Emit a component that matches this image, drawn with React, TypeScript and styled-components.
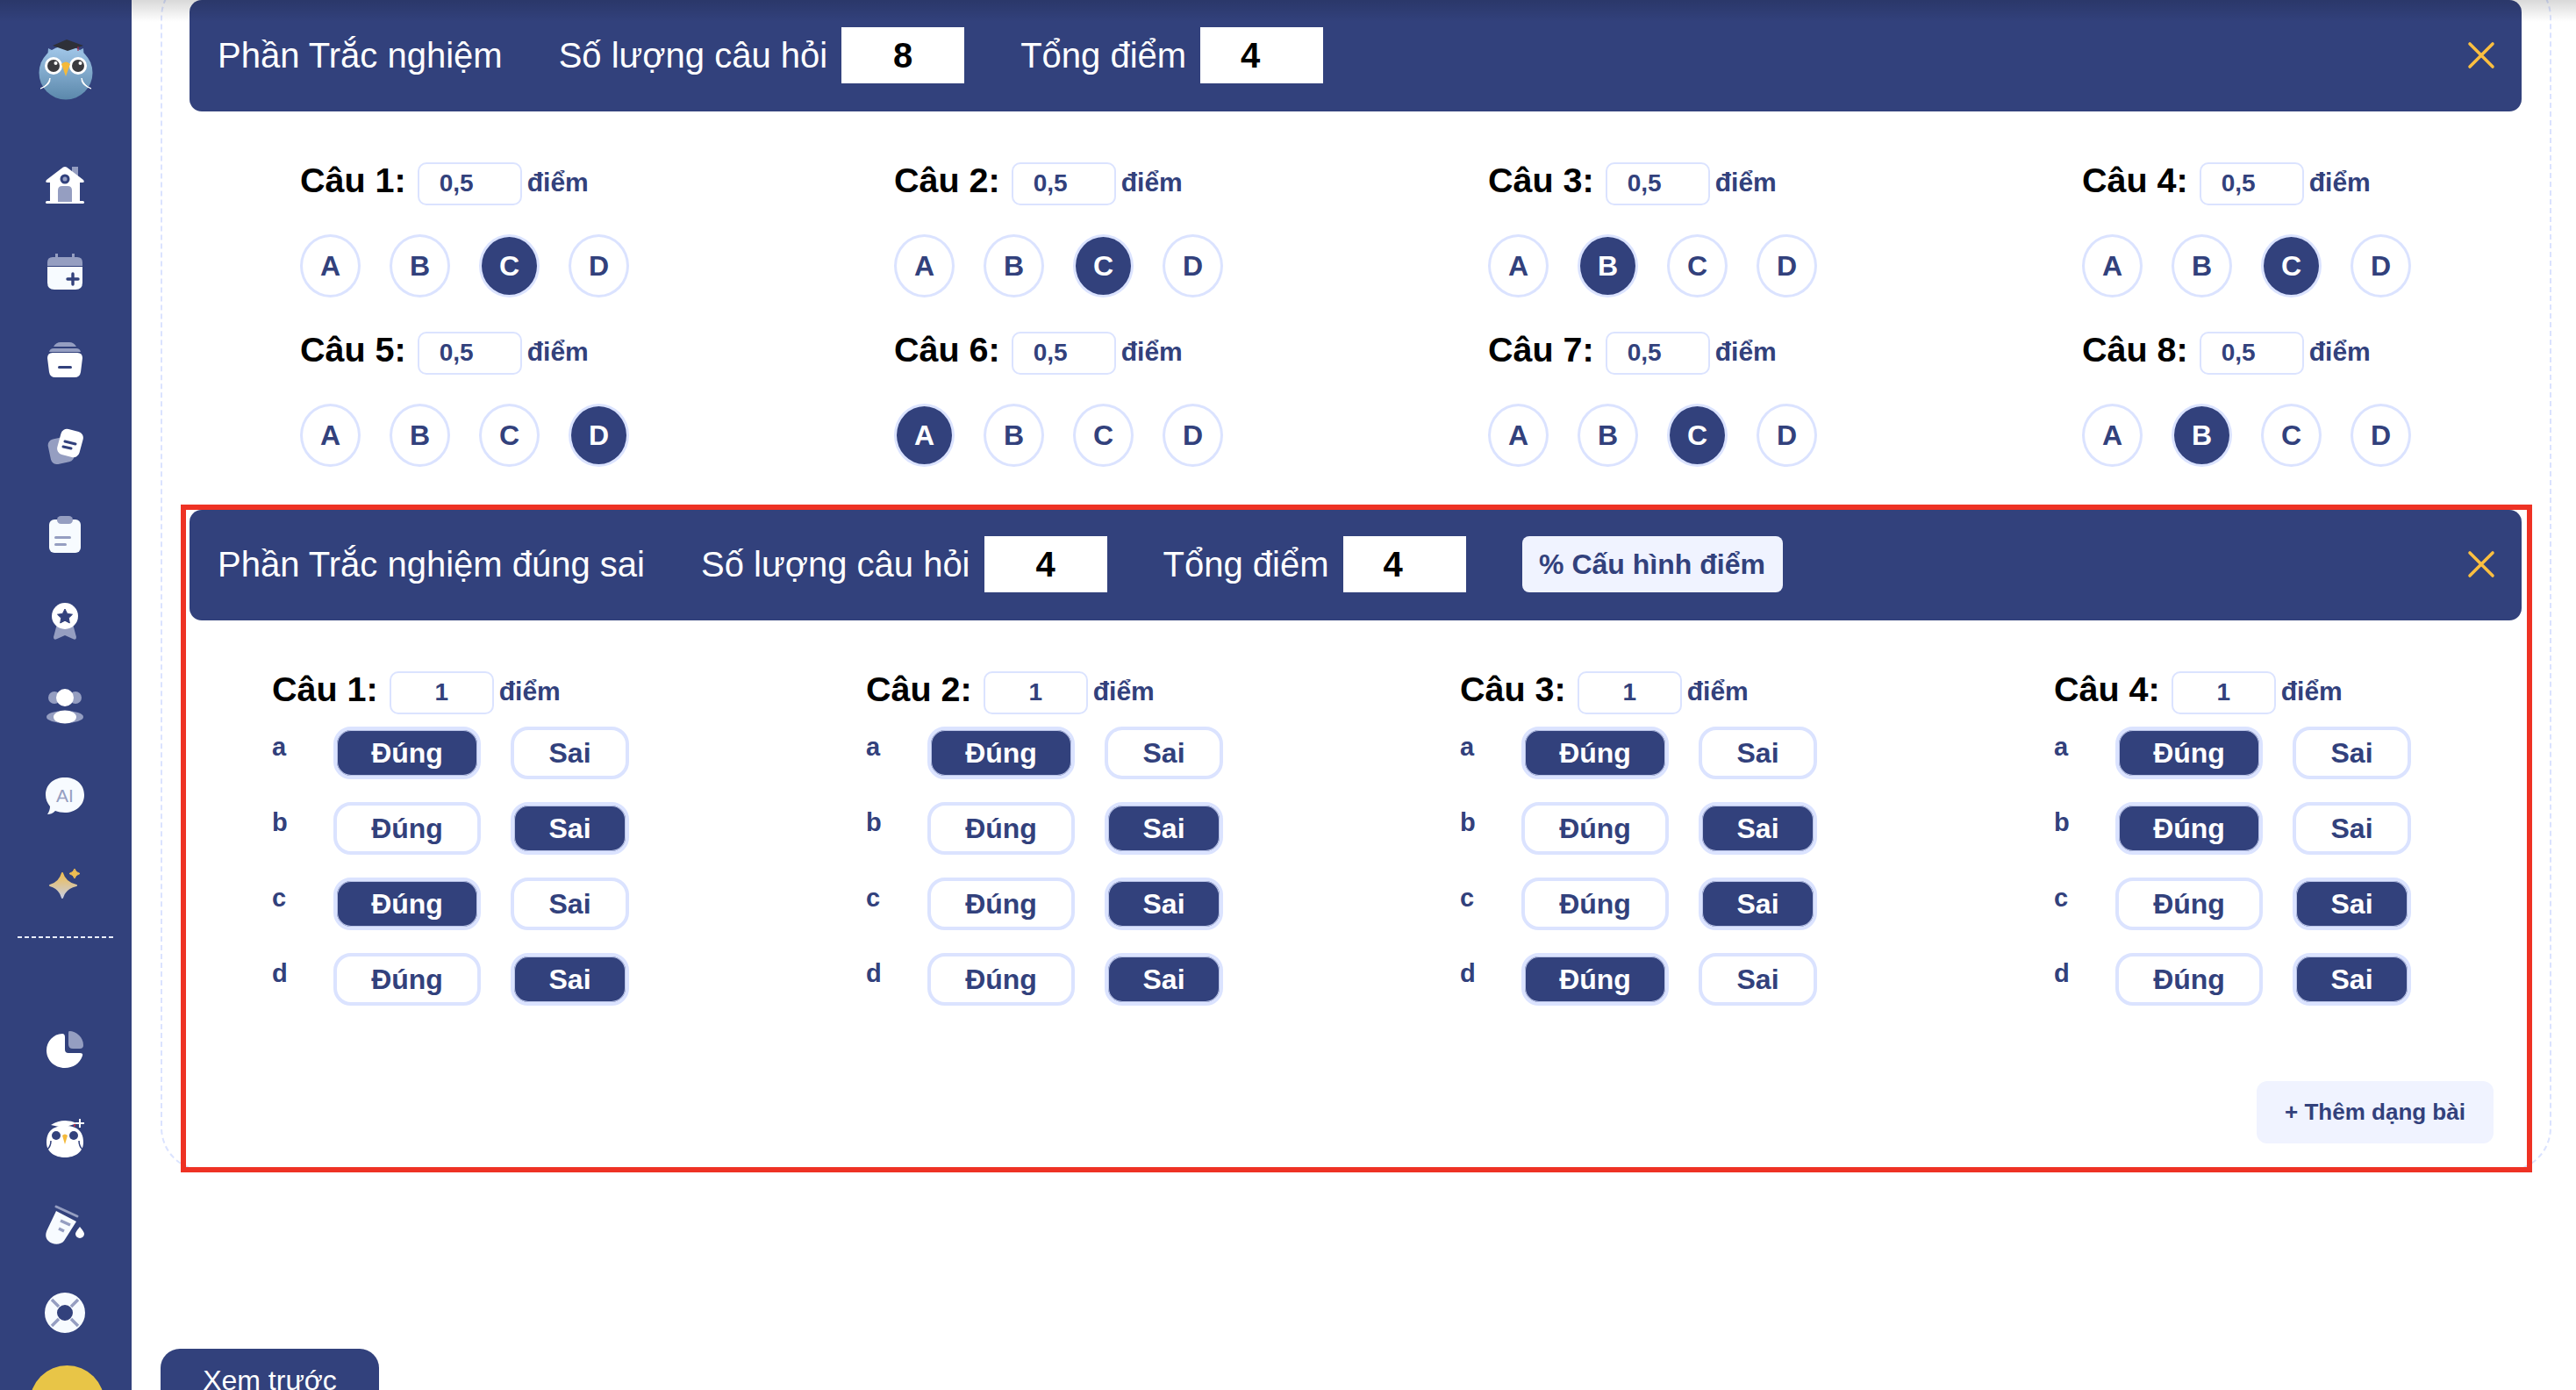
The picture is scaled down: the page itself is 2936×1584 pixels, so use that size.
import React from "react";
import styled, { createGlobalStyle } from "styled-components";

const NAVY = "#32417c";
const EDGE = "#dbe3ff";
const PALE = "#f0f3ff";
const ICON = "#f7fbff";
const SOFT = "#959ec1";

const Global = createGlobalStyle`
  html, body {
    margin: 0;
    height: 1584px;
    overflow: hidden;
    background: #fff;
    font-family: "Liberation Sans", Arial, sans-serif;
  }
`;

const Page = styled.div`
  display: flex;
  position: relative;
  width: 2936px;
  height: 1584px;
  overflow: hidden;
`;

const TopShade = styled.div`
  position: absolute;
  top: 0;
  left: 0;
  right: 0;
  height: 25px;
  background: linear-gradient(rgba(0, 0, 0, 0.15), rgba(0, 0, 0, 0));
`;

const Sidebar = styled.aside`
  width: 150px;
  height: 1584px;
  flex: none;
  background: ${NAVY};
  display: flex;
  flex-direction: column;
  align-items: center;
  padding-top: 45px;
  box-sizing: border-box;
`;

const LogoMark = styled.svg`
  display: block;
  flex: none;
  width: 64px;
  height: 70px;
`;

const NavList = styled.nav<{ $gap: number; $top: number }>`
  display: flex;
  flex: none;
  flex-direction: column;
  align-items: center;
  gap: ${({ $gap }) => $gap}px;
  margin-top: ${({ $top }) => $top}px;
  margin-right: 3px;
`;

const NavDivider = styled.div`
  width: 110px;
  height: 2px;
  flex: none;
  margin-top: 37px;
  background: repeating-linear-gradient(90deg, #e9edff 0 5px, transparent 5px 8px);
`;

const Avatar = styled.div`
  width: 85px;
  height: 85px;
  flex: none;
  border-radius: 50%;
  background: #e8c547;
  margin-top: 36px;
  margin-left: 2px;
`;

const Main = styled.main`
  flex: 1;
  display: flex;
  flex-direction: column;
  padding: 0 28px 0 33px;
  min-width: 0;
`;

const Frame = styled.div`
  margin-top: -30px;
  height: 1365px;
  flex: none;
  box-sizing: border-box;
  border: 2px dashed ${EDGE};
  border-radius: 50px;
  padding: 28px 32px 0 31px;
`;

const Section = styled.section<{ $marked?: boolean }>`
  ${({ $marked }) =>
    $marked
      ? `
    margin: 49px -6px 0 -4px;
    padding: 0 6px 0 4px;
    height: 749px;
    outline: 6px solid #ee3224;
  `
      : ""}
`;

const Header = styled.header`
  height: 127px;
  box-sizing: border-box;
  background: ${NAVY};
  border-radius: 14px;
  display: flex;
  align-items: center;
  padding: 0 30px 2px 32px;
  color: #fff;
  font-size: 40px;
  line-height: 64px;
  white-space: nowrap;
`;

const MarkedHeader = styled(Header)`
  height: 126px;
`;

const HeadLabel = styled.span`
  margin-right: 16px;
  &:first-child {
    margin-right: 64px;
  }
`;

const HeadValue = styled.div<{ $shift?: number }>`
  width: 140px;
  height: 64px;
  margin-right: 64px;
  background: #fff;
  color: #000;
  font-weight: 700;
  text-align: center;
  padding-right: ${({ $shift }) => $shift ?? 0}px;
  box-sizing: border-box;
`;

const ConfigButton = styled.div`
  height: 64px;
  width: 297px;
  box-sizing: border-box;
  background: ${PALE};
  border-radius: 8px;
  color: ${NAVY};
  font-size: 32px;
  font-weight: 700;
  text-align: center;
`;

const CloseButton = styled.svg`
  width: 32px;
  height: 32px;
  margin-left: auto;
`;

const ChoiceGrid = styled.div`
  display: grid;
  grid-template-columns: repeat(4, 677px);
  row-gap: 39px;
  padding: 58px 0 0 126px;
`;

const TrueFalseGrid = styled.div`
  display: grid;
  grid-template-columns: repeat(4, 677px);
  padding: 58px 0 0 94px;
`;

const QuestionHead = styled.div`
  display: flex;
  align-items: flex-start;
  height: 49px;
`;

const QuestionTitle = styled.span`
  font-size: 39.5px;
  font-weight: 700;
  line-height: 40px;
  color: #000;
  margin-right: 13px;
  white-space: nowrap;
`;

const Score = styled.div<{ $center?: boolean }>`
  width: 119px;
  height: 49px;
  box-sizing: border-box;
  border: 2px solid ${EDGE};
  border-radius: 10px;
  color: ${NAVY};
  font-size: 28px;
  font-weight: 700;
  line-height: 43px;
  padding-left: 23px;
  ${({ $center }) => ($center ? "padding-left: 0; text-align: center;" : "")}
  margin-right: 6px;
`;

const Unit = styled.span`
  color: ${NAVY};
  font-size: 30px;
  font-weight: 700;
  line-height: 46px;
`;

const Circles = styled.div`
  display: flex;
  gap: 33px;
  margin-top: 33px;
`;

const Circle = styled.div<{ $on: boolean }>`
  width: 69px;
  height: 72px;
  box-sizing: border-box;
  border-radius: 50%;
  border: 3px solid ${EDGE};
  display: flex;
  align-items: center;
  justify-content: center;
  font-size: 32px;
  font-weight: 700;
  color: ${({ $on }) => ($on ? "#fff" : NAVY)};
  background: ${({ $on }) => ($on ? NAVY : "#fff")};
`;

const Statements = styled.div`
  display: flex;
  flex-direction: column;
  gap: 26px;
  margin-top: 14px;
`;

const Statement = styled.div`
  display: flex;
  align-items: flex-start;
`;

const StatementKey = styled.span`
  width: 70px;
  flex: none;
  color: ${NAVY};
  font-size: 29px;
  font-weight: 700;
  line-height: 46px;
`;

const Toggle = styled.div<{ $on: boolean; $wide?: boolean }>`
  width: ${({ $wide }) => ($wide ? 168 : 135)}px;
  height: 60px;
  margin-right: 34px;
  box-sizing: border-box;
  border: 4px solid ${EDGE};
  border-radius: 20px;
  display: flex;
  align-items: center;
  justify-content: center;
  font-size: 32px;
  font-weight: 700;
  color: ${({ $on }) => ($on ? "#fff" : NAVY)};
  background: ${({ $on }) => ($on ? NAVY : "#fff")};
  ${({ $on }) => ($on ? "box-shadow: 0 0 0 1px #b9c3e6 inset;" : "")}
`;

const Footer = styled.div`
  display: flex;
  justify-content: flex-end;
  margin-top: 86px;
  padding-right: 32px;
`;

const AddButton = styled.div`
  width: 270px;
  height: 71px;
  background: ${PALE};
  border-radius: 12px;
  display: flex;
  align-items: center;
  justify-content: center;
  color: ${NAVY};
  font-size: 26px;
  font-weight: 700;
`;

const PreviewButton = styled.div`
  width: 249px;
  height: 80px;
  margin-top: 202px;
  flex: none;
  background: ${NAVY};
  border-radius: 22px 22px 0 0;
  color: #fff;
  font-size: 32px;
  line-height: 72px;
  text-align: center;
`;

const Icon = styled.svg`
  display: block;
  width: 48px;
  height: 48px;
`;

const OwlLogo = () => (
  <LogoMark viewBox="0 0 64 70">
    <defs>
      <linearGradient id="owlBody" x1="0" y1="0" x2="0" y2="1">
        <stop offset="0" stopColor="#a3c8ea" />
        <stop offset="1" stopColor="#5b88ab" />
      </linearGradient>
    </defs>
    <path d="M12 10 L11 22 L24 16Z M52 10 L53 22 L40 16Z" fill="#8fb6da" />
    <circle cx="32" cy="38" r="30.5" fill="url(#owlBody)" />
    <path d="M17 7 L33 0 L52 7 L34 13Z" fill="#2e3038" />
    <path d="M46 8 L46 13" stroke="#a3263c" strokeWidth="1.2" />
    <circle cx="18" cy="30" r="10" fill="#fff" />
    <circle cx="46" cy="30" r="10" fill="#fff" />
    <circle cx="18" cy="30" r="7" fill="#3a3a3e" />
    <circle cx="46" cy="30" r="7" fill="#3a3a3e" />
    <circle cx="20.5" cy="27" r="2" fill="#fff" />
    <circle cx="48.5" cy="27" r="2" fill="#fff" />
    <path d="M27 28 Q32 23 37 28 L32 42Z" fill="#f4b93a" />
    <path d="M3 56 Q12 52 14 44 Q15 52 3 56Z M61 56 Q52 52 50 44 Q49 52 61 56Z" fill="#fff" stroke="#fff" />
  </LogoMark>
);

const HomeIcon = () => (
  <Icon viewBox="0 0 48 48">
    <rect x="32" y="3" width="7" height="12" fill={SOFT} />
    <path d="M24 3 Q26 3 28 5 L45 18 Q47 21 44 21 L41 21 L41 43 L7 43 L7 21 L4 21 Q1 21 3 18 L20 5 Q22 3 24 3Z" fill="#fff" />
    <rect x="2" y="42" width="44" height="3" rx="1.5" fill="#fff" />
    <circle cx="24" cy="17" r="5.5" fill={NAVY} />
    <circle cx="24" cy="17" r="2.5" fill={SOFT} />
    <path d="M16 43 L16 30 Q16 25 21 25 L27 25 Q32 25 32 30 L32 43Z" fill={SOFT} />
  </Icon>
);

const CalendarIcon = () => (
  <Icon viewBox="0 0 48 48">
    <path d="M13 3 L16 3 L16 7 L32 7 L32 3 L35 3 L35 7 L38 7 Q44 7 44 13 L44 17 L4 17 L4 13 Q4 7 10 7 L13 7Z" fill={SOFT} />
    <path d="M4 18 L44 18 L44 36 Q44 44 36 44 L12 44 Q4 44 4 36Z" fill={ICON} />
    <path d="M33 26 L33 38 M27 32 L39 32" stroke={NAVY} strokeWidth="3.4" strokeLinecap="round" />
  </Icon>
);

const ArchiveIcon = () => (
  <Icon viewBox="0 0 48 48">
    <path d="M11 9 Q14 4 19 4 L29 4 Q34 4 37 9Z" fill={SOFT} />
    <path d="M6 15 Q7 11 11 11 L37 11 Q41 11 42 15Z" fill={SOFT} />
    <path d="M4 22 Q4 16 10 16 L38 16 Q44 16 44 22 L42 38 Q41 44 35 44 L13 44 Q7 44 6 38Z" fill="#fff" />
    <rect x="16" y="31" width="16" height="3" rx="1.5" fill={NAVY} />
  </Icon>
);

const NotesIcon = () => (
  <Icon viewBox="0 0 48 48">
    <rect x="6" y="14" width="27" height="29" rx="7" transform="rotate(-12 19 28)" fill={SOFT} />
    <rect x="17" y="5" width="26" height="30" rx="7" transform="rotate(15 30 20)" fill="#fff" />
    <path d="M24 18 L36 21 M22 24 L31 26" stroke={NAVY} strokeWidth="3" strokeLinecap="round" />
  </Icon>
);

const ClipboardIcon = () => (
  <Icon viewBox="0 0 48 48">
    <rect x="6" y="7" width="36" height="38" rx="6" fill={ICON} />
    <rect x="15" y="3" width="18" height="9" rx="4.5" fill={SOFT} />
    <rect x="12" y="26" width="19" height="3" rx="1.5" fill={SOFT} />
    <rect x="12" y="34" width="14" height="3" rx="1.5" fill={SOFT} />
  </Icon>
);

const MedalIcon = () => (
  <Icon viewBox="0 0 48 48">
    <path d="M15 27 L33 27 L37 42 Q37 46 33 44 L24 40 L15 44 Q11 46 11 42Z" fill={SOFT} />
    <circle cx="24" cy="18" r="15" fill="#fff" />
    <path d="M24 10 L26.7 15.4 L32.5 16.2 L28.3 20.3 L29.3 26 L24 23.2 L18.7 26 L19.7 20.3 L15.5 16.2 L21.3 15.4Z" fill={NAVY} stroke={NAVY} strokeLinejoin="round" />
  </Icon>
);

const PeopleIcon = () => (
  <Icon viewBox="0 0 48 48">
    <circle cx="12" cy="12" r="7" fill={SOFT} />
    <circle cx="36" cy="12" r="7" fill={SOFT} />
    <circle cx="24" cy="12" r="10" fill="#fff" />
    <ellipse cx="24" cy="34" rx="21" ry="7" fill={SOFT} />
    <ellipse cx="24" cy="34" rx="13" ry="7.5" fill="#fff" />
  </Icon>
);

const AiIcon = () => (
  <Icon viewBox="0 0 48 48">
    <path d="M24 3 C37 3 46 11 46 23 C46 35 36 43 24 43 C20 43 16 42 13 41 C10 44 7 45 4 45 C6 42 7 39 7 36 C4 32 2 28 2 23 C2 11 11 3 24 3Z" fill={ICON} />
    <text x="24" y="31" textAnchor="middle" fontFamily="Liberation Sans, Arial, sans-serif" fontSize="21" fill={SOFT}>AI</text>
  </Icon>
);

const SparkleIcon = () => (
  <Icon viewBox="0 0 48 48">
    <defs>
      <linearGradient id="spark" x1="0" y1="0" x2="0" y2="1">
        <stop offset="0" stopColor="#eebd52" />
        <stop offset="1" stopColor="#c9cde0" />
      </linearGradient>
    </defs>
    <path d="M21 13 Q24 24 37 27 Q24 30 21 41 Q18 30 7 27 Q18 24 21 13Z" fill="url(#spark)" stroke="url(#spark)" strokeWidth="2" strokeLinejoin="round" />
    <path d="M35 8 Q36 12 41 13.5 Q36 15 35 19 Q34 15 29 13.5 Q34 12 35 8Z" fill="#eebd52" stroke="#eebd52" strokeLinejoin="round" />
  </Icon>
);

const PieIcon = () => (
  <Icon viewBox="0 0 48 48">
    <path d="M21 6 Q24 6 24 10 L24 24 Q24 28 28 28 L41 28 Q45 28 44 31 C41 40 33 45 24 45 C12 45 3 36 3 25 C3 15 11 6 21 6Z" fill="#fff" />
    <path d="M29 3 C37 3 45 10 45 19 Q45 23 41 23 L33 23 Q28 23 28 18 L28 5 Q28 3 29 3Z" fill={SOFT} />
  </Icon>
);

const OwlIcon = () => (
  <Icon viewBox="0 0 48 48">
    <path d="M8 10 Q22 1 38 8 L22 13Z" fill="#fff" />
    <path d="M35 9 L35 12" stroke="#b0304a" strokeWidth="2" />
    <path d="M41 3 L41 13 M36 8 L46 8" stroke="#fff" strokeWidth="2" />
    <path d="M3 30 C3 19 8 11 24 11 C40 11 45 19 45 30 C45 41 35 47 24 47 C13 47 3 41 3 30Z" fill="#fff" />
    <circle cx="14" cy="22" r="5" fill={NAVY} />
    <circle cx="34" cy="22" r="5" fill={NAVY} />
    <path d="M21 22 Q24 19 27 22 L24 32Z" fill="#f4b93a" />
    <path d="M4 38 Q8 34 8 28 M44 38 Q40 34 40 28" stroke={NAVY} strokeWidth="1.5" fill="none" />
  </Icon>
);

const TubeIcon = () => (
  <Icon viewBox="0 0 48 48">
    <path d="M14 8 L37 20 L23 42 C19 47 10 47 5 42 C1 38 2 33 4 29Z" fill={ICON} />
    <path d="M14 3 L38 14" stroke={SOFT} strokeWidth="3" strokeLinecap="round" />
    <path d="M19 19 L30 24 M17 28 L23 31" stroke={SOFT} strokeWidth="3.5" />
    <path d="M41 26 Q46 32 46 34 A5 5 0 1 1 36 34 Q36 32 41 26Z" fill="#fff" />
  </Icon>
);

const BuoyIcon = () => (
  <Icon viewBox="0 0 48 48">
    <circle cx="24" cy="24" r="16" fill="none" stroke={ICON} strokeWidth="14" />
    <path d="M9 9 L17 17 M39 9 L31 17 M9 39 L17 31 M39 39 L31 31" stroke={SOFT} strokeWidth="3.5" />
  </Icon>
);

const topNav = [HomeIcon, CalendarIcon, ArchiveIcon, NotesIcon, ClipboardIcon, MedalIcon, PeopleIcon, AiIcon, SparkleIcon];
const bottomNav = [PieIcon, OwlIcon, TubeIcon, BuoyIcon];

const letters = ["A", "B", "C", "D"];
const choiceAnswers = ["C", "C", "B", "C", "D", "A", "C", "B"];

// true = Đúng, false = Sai, one array per question
const trueFalseAnswers = [
  [true, false, true, false],
  [true, false, false, false],
  [true, false, false, true],
  [true, true, false, false],
];

const statementKeys = ["a", "b", "c", "d"];

const Close = () => (
  <CloseButton viewBox="0 0 32 32">
    <path d="M3 3 L29 29 M29 3 L3 29" stroke="#fbbf40" strokeWidth="3.6" strokeLinecap="round" />
  </CloseButton>
);

const App = () => {
  return (
    <Page>
      <Global />
      <Sidebar>
        <OwlLogo />
        <NavList $gap={51.4} $top={72}>
          {topNav.map((Item, i) => (
            <Item key={i} />
          ))}
        </NavList>
        <NavDivider />
        <NavList $gap={52} $top={103}>
          {bottomNav.map((Item, i) => (
            <Item key={i} />
          ))}
        </NavList>
        <Avatar />
      </Sidebar>
      <Main>
        <Frame>
          <Section>
            <Header>
              <HeadLabel>Phần Trắc nghiệm</HeadLabel>
              <HeadLabel>Số lượng câu hỏi</HeadLabel>
              <HeadValue>8</HeadValue>
              <HeadLabel>Tổng điểm</HeadLabel>
              <HeadValue $shift={26}>4</HeadValue>
              <Close />
            </Header>
            <ChoiceGrid>
              {choiceAnswers.map((answer, i) => (
                <div key={i}>
                  <QuestionHead>
                    <QuestionTitle>Câu {i + 1}:</QuestionTitle>
                    <Score>0,5</Score>
                    <Unit>điểm</Unit>
                  </QuestionHead>
                  <Circles>
                    {letters.map((letter) => (
                      <Circle key={letter} $on={letter === answer}>
                        {letter}
                      </Circle>
                    ))}
                  </Circles>
                </div>
              ))}
            </ChoiceGrid>
          </Section>
          <Section $marked>
            <MarkedHeader>
              <HeadLabel>Phần Trắc nghiệm đúng sai</HeadLabel>
              <HeadLabel>Số lượng câu hỏi</HeadLabel>
              <HeadValue>4</HeadValue>
              <HeadLabel>Tổng điểm</HeadLabel>
              <HeadValue $shift={26}>4</HeadValue>
              <ConfigButton>% Cấu hình điểm</ConfigButton>
              <Close />
            </MarkedHeader>
            <TrueFalseGrid>
              {trueFalseAnswers.map((answers, i) => (
                <div key={i}>
                  <QuestionHead>
                    <QuestionTitle>Câu {i + 1}:</QuestionTitle>
                    <Score $center>1</Score>
                    <Unit>điểm</Unit>
                  </QuestionHead>
                  <Statements>
                    {answers.map((isTrue, j) => (
                      <Statement key={j}>
                        <StatementKey>{statementKeys[j]}</StatementKey>
                        <Toggle $wide $on={isTrue}>
                          Đúng
                        </Toggle>
                        <Toggle $on={!isTrue}>Sai</Toggle>
                      </Statement>
                    ))}
                  </Statements>
                </div>
              ))}
            </TrueFalseGrid>
            <Footer>
              <AddButton>+ Thêm dạng bài</AddButton>
            </Footer>
          </Section>
        </Frame>
        <PreviewButton>Xem trước</PreviewButton>
      </Main>
      <TopShade />
    </Page>
  );
};

export default App;
